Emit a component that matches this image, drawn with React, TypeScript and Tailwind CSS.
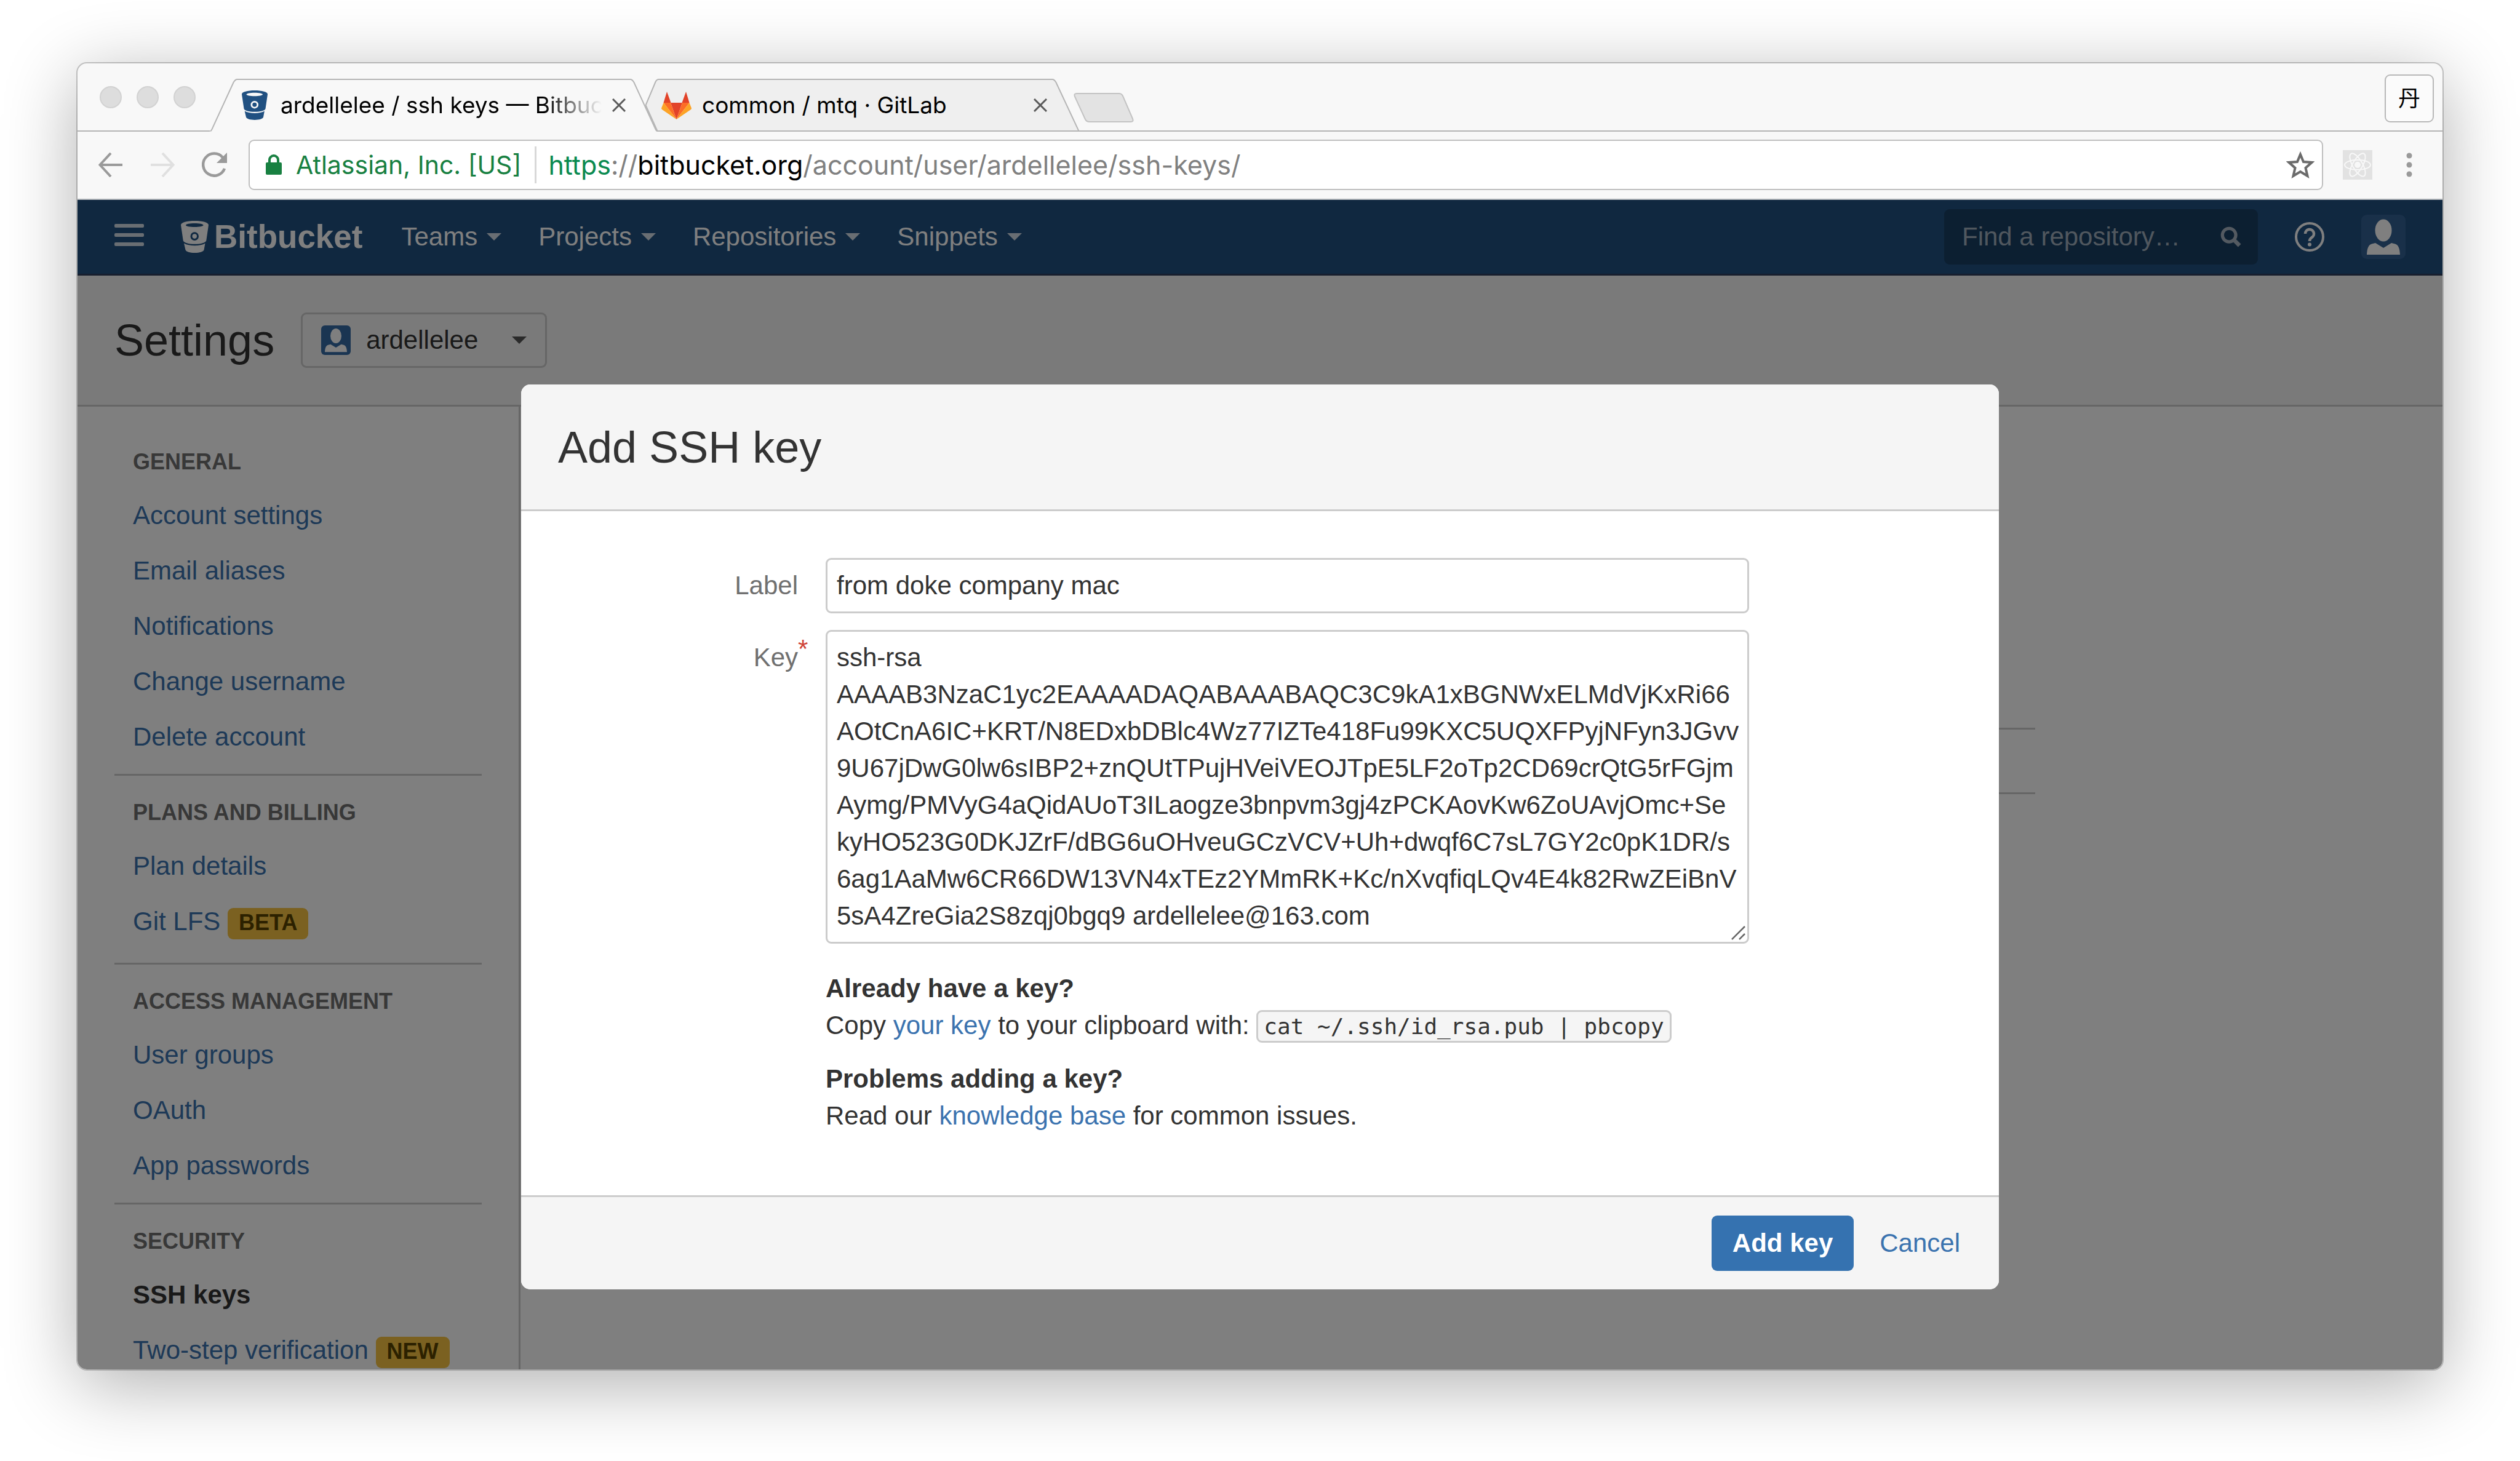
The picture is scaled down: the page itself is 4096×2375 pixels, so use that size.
import React from "react";

const uiFont = "font-['Inter','Noto_Sans_CJK_SC',sans-serif]";
const pageFont = "font-['Liberation_Sans',Arial,sans-serif]";

const sshKey = [
  "ssh-rsa",
  "AAAAB3NzaC1yc2EAAAADAQABAAABAQC3C9kA1xBGNWxELMdVjKxRi66",
  "AOtCnA6IC+KRT/N8EDxbDBlc4Wz77IZTe418Fu99KXC5UQXFPyjNFyn3JGvv",
  "9U67jDwG0lw6sIBP2+znQUtTPujHVeiVEOJTpE5LF2oTp2CD69crQtG5rFGjm",
  "Aymg/PMVyG4aQidAUoT3ILaogze3bnpvm3gj4zPCKAovKw6ZoUAvjOmc+Se",
  "kyHO523G0DKJZrF/dBG6uOHveuGCzVCV+Uh+dwqf6C7sL7GY2c0pK1DR/s",
  "6ag1AaMw6CR66DW13VN4xTEz2YMmRK+Kc/nXvqfiqLQv4E4k82RwZEiBnV",
  "5sA4ZreGia2S8zqj0bgq9 ardellelee@163.com",
].join("\n");

function Bucket({ className }: { className: string }) {
  return (
    <svg viewBox="0 0 180 207" preserveAspectRatio="none" className={className} fill="currentColor" aria-hidden="true">
      <path
        fillRule="evenodd"
        d="M0 27C0 10 40 0 90 0s90 10 90 27l-15 101c-5 14-35 22-75 22s-70-8-75-22ZM32 28c0 7 26 12 57 12s57-5 57-12-26-12-57-12-57 5-57 12ZM62 100a27 27 0 1 0 54 0a27 27 0 1 0-54 0Z"
      />
      <circle cx="89" cy="100" r="15" />
      <path d="M20 145c18 10 42 15 70 15s52-5 68-15l-8 43c-4 11-28 19-60 19s-56-8-60-19Z" />
    </svg>
  );
}

function GitLabLogo() {
  return (
    <svg viewBox="0 0 49 45" className="h-[45px] w-[49px] shrink-0" aria-hidden="true">
      <path fill="#e24329" d="M9 0 15.500 18H3.500ZM40 0 45.500 18H33.500ZM15 18H34L24.500 45Z" />
      <path fill="#fc6d26" d="M3.500 18H15L24.500 45ZM45.500 18H34L24.500 45Z" />
      <path fill="#fca326" d="M3.500 18 0 27Q0 28 1 29L24.500 45ZM45.500 18 49 27Q49 28 48 29L24.500 45Z" />
    </svg>
  );
}

function Person({ className }: { className: string }) {
  return (
    <svg viewBox="0 0 72 72" className={className} fill="#fff" aria-hidden="true">
      <ellipse cx="36" cy="25.500" rx="13.500" ry="18" />
      <path d="M9 65C9.500 54 12 49 17 47.500L23 46L36 54L49 46L55 47.500C60 49 62.500 54 63 65Z" />
    </svg>
  );
}

function Caret({ className }: { className: string }) {
  return (
    <svg viewBox="0 0 24 12" className={`h-[12px] w-[24px] shrink-0 ${className}`} fill="currentColor" aria-hidden="true">
      <path d="M0 0H24L12 12Z" />
    </svg>
  );
}

function CloseMark() {
  return (
    <button type="button" aria-label="Close tab" className="shrink-0">
      <svg viewBox="0 0 22 22" className="h-[22px] w-[22px]" stroke="#5a5a5a" strokeWidth="3" aria-hidden="true">
        <path d="M1 1 21 21M21 1 1 21" />
      </svg>
    </button>
  );
}

function TabStrip() {
  return (
    <div className="flex h-[111px] shrink-0 items-end">
      <div className="flex w-[215px] items-center gap-[24px] self-stretch border-b-2 border-[#b5b5b5] pl-[36px]">
        {["Close window", "Minimise", "Zoom"].map((n) => (
          <button key={n} type="button" aria-label={n} className="size-[36px] rounded-full border-2 border-[#d2d2d2] bg-[#dddddd]" />
        ))}
      </div>
      <div className="relative z-10 flex h-[86px] w-[728px] shrink-0 items-center pl-[52px]">
        <svg viewBox="0 0 727 86" className="absolute inset-0 h-full w-full" fill="#f8f8f8" stroke="#b5b5b5" strokeWidth="2" aria-hidden="true">
          <path d="M0 85Q2 85 3 82L38 6Q41 1 44 1H683Q686 1 689 6L724 82Q725 85 727 85" />
        </svg>
        <div className="relative flex w-full items-center">
          <Bucket className="h-[48px] w-[42px] shrink-0 text-[#205081]" />
          <span className="ml-[21px] w-[522px] overflow-hidden whitespace-nowrap text-[37px] leading-[48px] text-black [mask-image:linear-gradient(to_right,black_82%,transparent)]">
            ardellelee / ssh keys — Bitbucket
          </span>
          <span className="ml-[17px] flex">
            <CloseMark />
          </span>
        </div>
      </div>
      <div className="relative -ml-[21px] flex h-[86px] w-[706px] shrink-0 items-center pl-[27px]">
        <svg viewBox="0 0 705 86" className="absolute inset-0 h-full w-full" fill="#efefef" stroke="#b5b5b5" strokeWidth="2" aria-hidden="true">
          <path d="M20 85L1 43L17 5Q19 1 22 1H662Q665 1 668 6L705 85Z" />
        </svg>
        <div className="relative flex w-full items-center">
          <GitLabLogo />
          <span className="ml-[17px] w-[522px] whitespace-nowrap text-[37px] leading-[48px] text-black">common / mtq · GitLab</span>
          <span className="ml-[17px] flex">
            <CloseMark />
          </span>
        </div>
      </div>
      <div className="flex flex-1 items-end justify-between self-stretch border-b-2 border-[#b5b5b5] pr-[14px] pb-[13px]">
        <button type="button" aria-label="New tab" className="-ml-[9px]">
          <svg viewBox="0 0 98 48" className="h-[48px] w-[98px]" fill="#e3e3e3" stroke="#c3c3c3" strokeWidth="2" aria-hidden="true">
            <path d="M5 1H74Q78 1 80 5L96 42Q98 47 93 47H26Q21 47 19 43L2 6Q0 1 5 1Z" />
          </svg>
        </button>
        <button type="button" className="h-[78px] w-[80px] rounded-[9px] border-2 border-[#b8b8b8] bg-[#fbfbfb] text-[36px] text-black">
          丹
        </button>
      </div>
    </div>
  );
}

function Toolbar() {
  return (
    <div className="flex h-[111px] shrink-0 items-center border-b-2 border-[#b4b8bc] pb-[2px] pl-[34px] pr-[49px]">
      <button type="button" aria-label="Back">
        <svg viewBox="0 0 40 40" className="size-[40px]" fill="none" stroke="#9a9a9a" strokeWidth="4" aria-hidden="true">
          <path d="M20 1 2.500 20 20 39M3 20H39" />
        </svg>
      </button>
      <button type="button" aria-label="Forward" className="ml-[44px]">
        <svg viewBox="0 0 40 40" className="size-[40px]" fill="none" stroke="#e0e0e0" strokeWidth="4" aria-hidden="true">
          <path d="M20 1 37.500 20 20 39M37 20H1" />
        </svg>
      </button>
      <button type="button" aria-label="Reload" className="ml-[44px]">
        <svg viewBox="0 0 42 42" className="size-[42px]" aria-hidden="true">
          <path d="M37 27A18 18 0 1 1 34 9" fill="none" stroke="#9a9a9a" strokeWidth="4.500" />
          <path d="M41 1V18H24Z" fill="#9a9a9a" />
        </svg>
      </button>
      <div className="ml-[34px] flex h-[82px] flex-1 items-center rounded-[9px] border-2 border-[#bfbfbf] bg-white pl-[26px] pr-[12px] leading-[60px] whitespace-nowrap">
        <svg viewBox="0 0 26 33" className="h-[33px] w-[26px]" aria-hidden="true">
          <rect x="0" y="13" width="26" height="20" rx="2" fill="#188041" />
          <path d="M6 14V9a7 7 0 0 1 14 0v5" fill="none" stroke="#188041" strokeWidth="4" />
        </svg>
        <span className="ml-[23px] text-[41px] text-[#188041]">Atlassian, Inc. [US]</span>
        <span className="ml-[22px] h-[60px] w-[3px] bg-[#d8d8d8]" />
        <a href="#" className="ml-[19px] text-[43px] text-[#808080]">
          <span className="text-[#0b8a50]">https</span>://<span className="text-black">bitbucket.org</span>/account/user/ardellelee/ssh-keys/
        </a>
        <button type="button" aria-label="Bookmark this page" className="ml-auto">
          <svg viewBox="0 0 46 44" className="h-[44px] w-[46px]" fill="none" stroke="#6b6b6b" strokeWidth="4" aria-hidden="true">
            <path d="M23 5 28 17 41.500 18 31.500 27 34.500 40 23 33 11.500 40 14.500 27 4.500 18 18 17Z" />
          </svg>
        </button>
      </div>
      <button type="button" aria-label="React Developer Tools" className="ml-[32px]">
        <svg viewBox="0 0 48 48" className="size-[48px]" fill="none" stroke="#f8f8f8" strokeWidth="2" aria-hidden="true">
          <rect width="48" height="48" fill="#e2e2e2" stroke="none" />
          <ellipse cx="24" cy="24" rx="21" ry="8" />
          <ellipse cx="24" cy="24" rx="21" ry="8" transform="rotate(60 24 24)" />
          <ellipse cx="24" cy="24" rx="21" ry="8" transform="rotate(120 24 24)" />
          <circle cx="24" cy="24" r="4" fill="#f8f8f8" />
        </svg>
      </button>
      <button type="button" aria-label="Browser menu" className="ml-[55px]">
        <svg viewBox="0 0 10 40" className="h-[40px] w-[10px]" fill="#9a9a9a" aria-hidden="true">
          <circle cx="5" cy="5" r="4.500" />
          <circle cx="5" cy="20" r="4.500" />
          <circle cx="5" cy="35" r="4.500" />
        </svg>
      </button>
    </div>
  );
}

function SiteHeader() {
  return (
    <header className="flex h-[123px] shrink-0 items-center border-b-3 border-[#2e3d5c] bg-[#205081] px-[60px] text-[42px] leading-[60px] text-white">
      <button type="button" aria-label="Menu">
        <svg viewBox="0 0 48 36" className="mb-[6px] h-[36px] w-[48px]" fill="#d2dce6" aria-hidden="true">
          <rect width="48" height="6" rx="2" />
          <rect y="15" width="48" height="6" rx="2" />
          <rect y="30" width="48" height="6" rx="2" />
        </svg>
      </button>
      <a href="#" className="ml-[60px] flex items-center">
        <Bucket className="h-[52px] w-[45px]" />
        <span className="ml-[9px] font-['Liberation_Sans_Narrow','Liberation_Sans',sans-serif] text-[53px] font-bold">Bitbucket</span>
      </a>
      <nav className="ml-[63px] flex gap-[60px]">
        {["Teams", "Projects", "Repositories", "Snippets"].map((n) => (
          <button key={n} type="button" className="flex items-center gap-[15px]">
            {n}
            <Caret className="text-[#d2dce6]" />
          </button>
        ))}
      </nav>
      <div className="ml-auto flex h-[90px] w-[510px] items-center rounded-[9px] bg-[#183e63] pr-[27px] pl-[29px]">
        <input
          type="text"
          aria-label="Find a repository"
          placeholder="Find a repository…"
          className="w-full min-w-0 bg-transparent outline-none placeholder:text-[#a0afbd]"
        />
        <svg viewBox="0 0 36 36" className="size-[34px] shrink-0" fill="none" stroke="#a8b5c2" aria-hidden="true">
          <circle cx="15" cy="15" r="11.500" strokeWidth="5.500" />
          <path d="M23 23 33 33" strokeWidth="7" />
        </svg>
      </div>
      <button type="button" aria-label="Help" className="ml-[60px]">
        <svg viewBox="0 0 48 48" className="size-[48px]" fill="none" stroke="#fff" aria-hidden="true">
          <circle cx="24" cy="24" r="22" strokeWidth="4" />
          <path d="M17 19a7 7 0 1 1 10.500 6Q24 27.500 24 31" strokeWidth="4.500" />
          <circle cx="24" cy="36.500" r="3" fill="#fff" stroke="none" />
        </svg>
      </button>
      <button type="button" aria-label="Your account" className="ml-[60px] rounded-[9px] bg-[#326092]">
        <Person className="size-[72px]" />
      </button>
    </header>
  );
}

type NavItem = { text: string; badge?: string; current?: boolean };
const navGroups: { title: string; items: NavItem[] }[] = [
  {
    title: "GENERAL",
    items: [
      { text: "Account settings" },
      { text: "Email aliases" },
      { text: "Notifications" },
      { text: "Change username" },
      { text: "Delete account" },
    ],
  },
  { title: "PLANS AND BILLING", items: [{ text: "Plan details" }, { text: "Git LFS", badge: "BETA" }] },
  { title: "ACCESS MANAGEMENT", items: [{ text: "User groups" }, { text: "OAuth" }, { text: "App passwords" }] },
  { title: "SECURITY", items: [{ text: "SSH keys", current: true }, { text: "Two-step verification", badge: "NEW" }] },
];

function Sidebar() {
  return (
    <nav className="w-[720px] shrink-0 border-r-3 border-[#cccccc] px-[60px] pt-[30px]">
      {navGroups.map((g, i) => (
        <section key={g.title} className={i ? "mt-[15px] border-t-3 border-[#cccccc]" : ""}>
          <h2 className="px-[30px] pt-[30px] pb-[12px] text-[36px] leading-[60px] font-bold text-[#707070]">{g.title}</h2>
          <ul>
            {g.items.map((it) => (
              <li key={it.text} className={`px-[30px] py-[15px] whitespace-nowrap ${it.badge ? "mb-[22px]" : ""}`}>
                <a href="#" className={it.current ? "font-bold text-[#333333]" : "text-[#3b73af]"}>
                  {it.text}
                </a>
                {it.badge && (
                  <>
                    {" "}
                    <span className="inline-block rounded-[9px] bg-[#f6c342] px-[18px] pb-[3px] text-[36px] leading-[48px] font-bold text-[#594300]">
                      {it.badge}
                    </span>
                  </>
                )}
              </li>
            ))}
          </ul>
        </section>
      ))}
    </nav>
  );
}

function AddKeyDialog() {
  return (
    <div role="dialog" aria-labelledby="dialog-title" className="w-[2402px] overflow-hidden rounded-[15px] bg-white">
      <h2 id="dialog-title" className="border-b-3 border-[#cccccc] bg-[#f5f5f5] px-[60px] pt-[57px] pb-[56px] text-[72px] leading-[90px]">
        Add SSH key
      </h2>
      <form onSubmit={(e) => e.preventDefault()}>
        <div className="pt-[76px] pb-[99px]">
          <div className="flex">
            <label htmlFor="key-label" className="w-[450px] py-[15px] text-right text-[#707070]">
              Label
            </label>
            <input
              id="key-label"
              type="text"
              defaultValue="from doke company mac"
              className="ml-[45px] h-[90px] w-[1501px] rounded-[9px] border-3 border-[#cccccc] px-[15px] outline-none"
            />
          </div>
          <div className="mt-[27px] flex">
            <label htmlFor="key-value" className="w-[450px] py-[15px] text-right text-[#707070]">
              <span className="relative">
                Key
                <span className="absolute -top-[20px] left-full text-[#d04437]">*</span>
              </span>
            </label>
            <div className="relative ml-[45px] flex w-[1501px]">
              <textarea
                id="key-value"
                rows={8}
                defaultValue={sshKey}
                className="h-[510px] w-full resize-none overflow-hidden rounded-[9px] border-3 border-[#cccccc] px-[15px] py-[12px] whitespace-pre outline-none"
              />
              <svg viewBox="0 0 24 24" className="absolute right-[5px] bottom-[5px] size-[24px]" stroke="#666666" strokeWidth="2.500" aria-hidden="true">
                <path d="M1 22 22 1M13 22 22 13" />
              </svg>
            </div>
          </div>
          <div className="mt-[43px] ml-[495px]">
            <h3 className="font-bold">Already have a key?</h3>
            <p className="h-[60px]">
              Copy{" "}
              <a href="#" className="text-[#3b73af]">
                your key
              </a>{" "}
              to your clipboard with:{" "}
              <code className="rounded-[9px] border-3 border-[#cccccc] bg-[#f5f5f5] px-[9px] py-[3px] font-['DejaVu_Sans_Mono',monospace] text-[36px]">
                cat ~/.ssh/id_rsa.pub | pbcopy
              </code>
            </p>
            <h3 className="mt-[27px] font-bold">Problems adding a key?</h3>
            <p>
              Read our{" "}
              <a href="#" className="text-[#3b73af]">
                knowledge base
              </a>{" "}
              for common issues.
            </p>
          </div>
        </div>
        <div className="flex items-center justify-end gap-[42px] border-t-3 border-[#cccccc] bg-[#f5f5f5] py-[30px] pr-[63px]">
          <button type="submit" className="h-[90px] rounded-[9px] bg-[#3572b0] px-[34px] font-bold text-white">
            Add key
          </button>
          <button type="button" className="text-[#3b73af]">
            Cancel
          </button>
        </div>
      </form>
    </div>
  );
}

export default function App() {
  return (
    <div className="flex h-screen flex-col bg-white px-[126px] pt-[103px] pb-[149px]">
      <div
        className={`flex min-h-0 flex-1 flex-col overflow-hidden rounded-[15px] bg-[#f8f8f8] shadow-[0_0_0_2px_rgba(0,0,0,0.2),0_24px_120px_rgba(0,0,0,0.32)] ${uiFont}`}
      >
        <TabStrip />
        <Toolbar />
        <div className={`relative flex min-h-0 flex-1 flex-col bg-white text-[42px] leading-[60px] text-[#333333] ${pageFont}`}>
          <SiteHeader />
          <div className="flex h-[213px] shrink-0 items-center gap-[43px] border-b-3 border-[#cccccc] bg-[#f5f5f5] px-[60px]">
            <h1 className="text-[72px] leading-[90px]">Settings</h1>
            <button type="button" className="flex h-[90px] items-center rounded-[9px] border-3 border-[#cccccc] px-[30px]">
              <span className="rounded-[6px] bg-[#346aa5]">
                <Person className="size-[48px]" />
              </span>
              <span className="ml-[25px]">ardellelee</span>
              <Caret className="ml-[55px] text-[#555555]" />
            </button>
          </div>
          <div className="flex min-h-0 flex-1 overflow-hidden">
            <Sidebar />
            <main className="flex-1 px-[60px]">
              <div className="h-[525px] max-w-[2402px] border-b-3 border-[#cccccc]" />
              <div className="h-[105px] max-w-[2402px] border-b-3 border-[#cccccc]" />
            </main>
          </div>
          <div className="absolute inset-0 flex items-start justify-center bg-black/50 pt-[300px]">
            <AddKeyDialog />
          </div>
        </div>
      </div>
    </div>
  );
}
